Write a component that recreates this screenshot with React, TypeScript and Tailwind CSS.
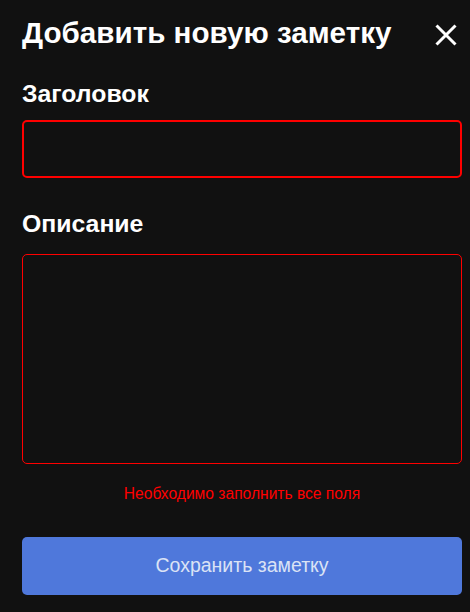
export default function App() {
  return (
    <div className="min-h-[612px] w-full bg-[#111111] pl-[22px] pr-[8px] pt-[15px] text-white" style={{ fontFamily: '"Liberation Sans", Arial, sans-serif' }}>
      <div className="flex items-center justify-between">
        <h2 className="text-[29.6px] font-bold leading-[36px]">Добавить новую заметку</h2>
        <button className="mr-[5px] mt-[4px] flex h-[22px] w-[22px] items-center justify-center">
          <svg width="22" height="22" viewBox="0 0 22 22" fill="none" stroke="white" strokeWidth="3">
            <path d="M1.5 1.5L20.5 20.5M20.5 1.5L1.5 20.5" />
          </svg>
        </button>
      </div>

      <label className="mt-[28px] block text-[24.8px] font-bold leading-[30px]">Заголовок</label>
      <input className="mt-[11px] block h-[58px] w-full rounded-[5px] border-2 border-[#ff0000] bg-transparent px-3 outline-none" />

      <label className="mt-[31px] block text-[24.8px] font-bold leading-[30px]">Описание</label>
      <textarea className="mt-[15px] block h-[210px] w-full resize-none rounded-[5px] border border-[#ff0000] bg-transparent p-3 outline-none" />

      <p className="mt-[19px] text-center text-[15.6px] leading-[22px] text-[#ff0000]">Необходимо заполнить все поля</p>

      <button className="mt-[32px] block h-[58px] w-full rounded-[5px] bg-[#4f78db] text-[19.5px] text-[#dbe3f5]">
        Сохранить заметку
      </button>
    </div>
  );
}
